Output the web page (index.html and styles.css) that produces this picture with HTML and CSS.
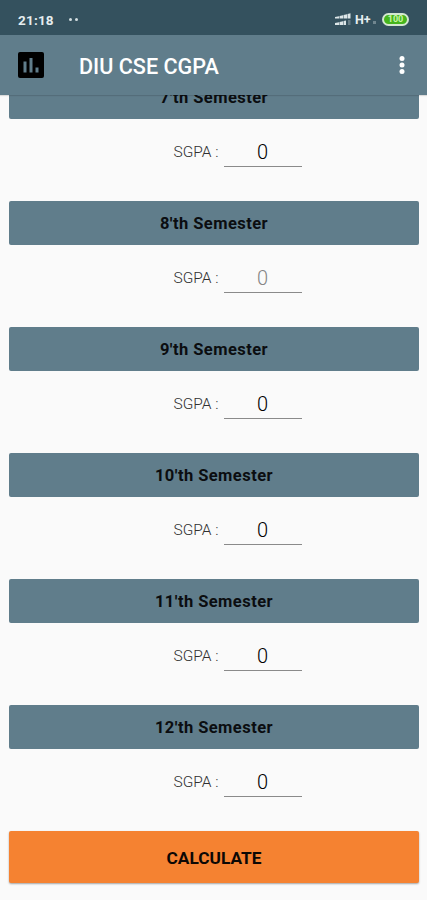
FILE: index.html
```html
<!DOCTYPE html>
<html lang="en">
<head>
<meta charset="utf-8">
<title>DIU CSE CGPA</title>
<link rel="stylesheet" href="styles.css">
</head>
<body>
<div class="screen">
  <div class="status">
    <span class="time">21:18</span>
    <span class="notes"><i></i><i></i></span>
    <svg class="signal" width="18" height="14" viewBox="0 0 18 14" fill="#dce6e8">
      <path d="M1 4l4-.8v2.300H1zM5.500 3l3.500-.7v3.200H5.500zM9.500 2l3.500-.8v4.300H9.500zM13.500 1l3-.8v5.300h-3z"/>
      <path d="M1 10l4-.8V12H1zM5.500 9l3.500-.7V12H5.500zM9.500 8l2.500-.5V12H9.500z"/>
      <path d="M14 7h2.500v5H14z" opacity=".3"/>
    </svg>
    <span class="net">H+</span>
    <span class="dot"></span>
    <span class="battery">100</span>
  </div>
  <header class="bar">
    <svg class="logo" width="26" height="26" viewBox="0 0 26 26">
      <rect width="26" height="26" rx="2" fill="#000"/>
      <path d="M5.500 9.500h3v11h-3zM11.500 6h3v14.500h-3zM17.500 15.500h3v5h-3z" fill="#607d8b"/>
    </svg>
    <h1>DIU CSE CGPA</h1>
    <svg class="more" width="6" height="20" viewBox="0 0 6 20" fill="#fff">
      <circle cx="3" cy="3.500" r="2.500"/><circle cx="3" cy="10" r="2.500"/><circle cx="3" cy="16.500" r="2.500"/>
    </svg>
  </header>
  <main class="content">
    <section class="sem"><h2>7'th Semester</h2><div class="row"><span class="label">SGPA :</span><span class="field">0</span></div></section>
    <section class="sem"><h2>8'th Semester</h2><div class="row"><span class="label">SGPA :</span><span class="field hint">0</span></div></section>
    <section class="sem"><h2>9'th Semester</h2><div class="row"><span class="label">SGPA :</span><span class="field">0</span></div></section>
    <section class="sem"><h2>10'th Semester</h2><div class="row"><span class="label">SGPA :</span><span class="field">0</span></div></section>
    <section class="sem"><h2>11'th Semester</h2><div class="row"><span class="label">SGPA :</span><span class="field">0</span></div></section>
    <section class="sem"><h2>12'th Semester</h2><div class="row"><span class="label">SGPA :</span><span class="field">0</span></div></section>
    <button class="calc">CALCULATE</button>
  </main>
</div>
</body>
</html>
```
FILE: styles.css
```css
* { box-sizing: border-box; }
body { margin: 0; background: #fafafa; font-family: Roboto, "Liberation Sans", sans-serif; }
.screen { width: 427px; height: 900px; display: flex; flex-direction: column; overflow: hidden; }
.status { flex: none; height: 35px; padding: 4px 18px 0; background: #34515e; color: #e6eef0; display: flex; align-items: center; }
.time { width: 37px; font-size: 13.5px; font-weight: 700; letter-spacing: .2px; }
.notes { display: flex; gap: 3px; margin-left: 14px; }
.notes i { width: 3px; height: 3px; border-radius: 50%; background: #d3dee1; }
.signal { margin-left: auto; }
.net { margin-left: 3px; width: 17px; font-size: 12.5px; font-weight: 700; }
.dot { width: 3px; height: 3px; margin: 5px 6px 0 1px; background: #70868f; }
.battery { width: 27px; height: 13px; border: 2px solid #d3e8d0; border-radius: 7px; background: #45b51c; color: #c8f5a8; font-size: 9px; line-height: 9.500px; font-weight: 700; text-align: center; }
.bar { flex: none; height: 60px; padding: 0 22px 0 18px; background: #607d8b; display: flex; align-items: center; box-shadow: 0 1px 1px rgba(0, 0, 0, .12); position: relative; z-index: 1; }
.bar h1 { margin: 2px 0 0 35px; font-size: 21.6px; font-weight: 500; color: #fff; white-space: nowrap; }
.more { margin-left: auto; }
.content { flex: 1; min-height: 0; overflow: hidden; padding: 0 8px 0 9px; }
.sem { height: 126px; }
.sem:first-child { margin-top: -20px; }
.sem h2 { margin: 0; height: 43.500px; border-radius: 2px; background: #607d8b; color: #0b0d10; font-size: 16.500px; line-height: 46px; font-weight: 700; letter-spacing: .45px; text-align: center; }
.row { display: flex; align-items: flex-start; padding: 16.500px 0 0 164.500px; }
.label { width: 50px; font-size: 15.500px; line-height: 35px; font-weight: 300; color: #303030; white-space: nowrap; }
.field { width: 78px; height: 32px; border-bottom: 1px solid #8a8a8a; font-size: 20px; line-height: 34px; font-weight: 300; text-align: center; color: #000; }
.hint { color: #858585; }
.calc { display: block; width: 100%; height: 52px; padding: 2px 0 0; border: 0; border-radius: 2px; background: #f58231; color: #0c0805; font: 700 17.300px Roboto, sans-serif; box-shadow: 0 1px 2px rgba(0, 0, 0, .35); }
```
